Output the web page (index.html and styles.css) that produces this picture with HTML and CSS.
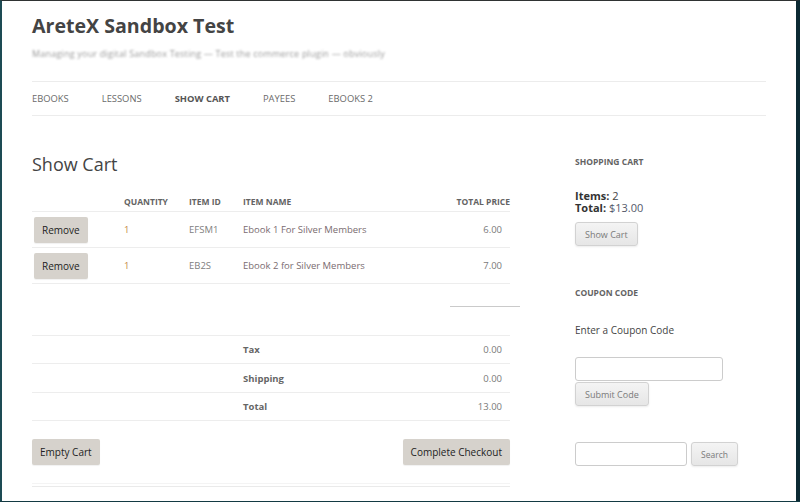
FILE: index.html
```html
<!DOCTYPE html>
<html lang="en">
<head>
<meta charset="utf-8">
<title>AreteX Sandbox Test</title>
<link rel="stylesheet" href="styles.css">
</head>
<body>
<div class="page">
  <header class="site-header">
    <h1 class="site-title">AreteX Sandbox Test</h1>
    <p class="tagline">Managing your digital Sandbox Testing — Test the commerce plugin — obviously</p>
    <nav class="nav">
      <a>EBOOKS</a>
      <a>LESSONS</a>
      <a class="current">SHOW CART</a>
      <a>PAYEES</a>
      <a>EBOOKS 2</a>
    </nav>
  </header>
  <div class="content">
    <main class="main">
      <h2 class="entry-title">Show Cart</h2>
      <table class="cart">
        <colgroup>
          <col class="c1"><col class="c2"><col class="c3"><col class="c4"><col class="c5">
        </colgroup>
        <thead>
          <tr><th></th><th>Quantity</th><th>Item ID</th><th>Item Name</th><th class="r">Total Price</th></tr>
        </thead>
        <tbody>
          <tr><td><button class="btn">Remove</button></td><td class="qty">1</td><td class="id">EFSM1</td><td class="name">Ebook 1 For Silver Members</td><td class="r price">6.00</td></tr>
          <tr><td><button class="btn">Remove</button></td><td class="qty">1</td><td class="id">EB2S</td><td class="name">Ebook 2 for Silver Members</td><td class="r price">7.00</td></tr>
        </tbody>
      </table>
      <div class="sep"></div>
      <table class="totals">
        <colgroup><col class="t1"><col class="t2"><col class="t3"></colgroup>
        <tr><td></td><th>Tax</th><td class="r price">0.00</td></tr>
        <tr class="tall"><td></td><th>Shipping</th><td class="r price">0.00</td></tr>
        <tr><td></td><th>Total</th><td class="r price">13.00</td></tr>
      </table>
      <div class="actions">
        <button class="btn big">Empty Cart</button>
        <button class="btn big">Complete Checkout</button>
      </div>
      <div class="footer-line"></div>
    </main>
    <aside class="sidebar">
      <section class="widget">
        <h3 class="widget-title">Shopping Cart</h3>
        <div class="mini">
          <div><b>Items:</b> 2</div>
          <div><b>Total:</b> <span class="amt">$13.00</span></div>
        </div>
        <button class="lbtn">Show Cart</button>
      </section>
      <section class="widget coupon">
        <h3 class="widget-title">Coupon Code</h3>
        <p class="coupon-label">Enter a Coupon Code</p>
        <input class="field coupon-field" type="text">
        <button class="lbtn">Submit Code</button>
      </section>
      <form class="search">
        <input class="field search-field" type="text">
        <button class="lbtn search-btn" type="button">Search</button>
      </form>
    </aside>
  </div>
</div>
</body>
</html>
```

FILE: styles.css
```css
html {
  background: #133a43;
}
body {
  margin: 0;
  font-family: "Open Sans", "Liberation Sans", sans-serif;
  color: #444;
}
.page {
  background: #fff;
  border-top: 1px solid #2f3333;
  border-left: 2px solid #1d4b54;
  border-right: 4px solid #0c2a33;
  padding: 12px 30px 0 30px;
  box-sizing: border-box;
  height: 501px;
  overflow: hidden;
}
.site-title {
  margin: 0;
  font-size: 19.6px;
  line-height: 26px;
  font-weight: 700;
  color: #444;
}
.tagline {
  margin: 8px 0 0 0;
  font-size: 9px;
  line-height: 14px;
  color: #9a9a9a;
  filter: blur(1.2px);
  white-space: nowrap;
  letter-spacing: 0.2px;
}
.nav {
  margin-top: 20px;
  border-top: 1px solid #ececec;
  border-bottom: 1px solid #ececec;
  height: 33px;
  display: flex;
  align-items: center;
  font-size: 9.4px;
  color: #6a6a6a;
}
.nav a {
  margin-right: 33px;
}
.nav a.current {
  font-weight: 700;
  color: #555;
}
.content {
  display: flex;
  justify-content: space-between;
}
.main {
  width: 478px;
}
.entry-title {
  margin: 36px 0 0 0;
  font-size: 18px;
  line-height: 24px;
  font-weight: 400;
  color: #444;
}
table {
  border-collapse: collapse;
  width: 100%;
  table-layout: fixed;
}
.cart {
  margin-top: 15px;
}
.c1 { width: 92px; }
.c2 { width: 65px; }
.c3 { width: 54px; }
.c5 { width: 60px; }
.cart th {
  text-align: left;
  font-size: 8.5px;
  font-weight: 700;
  text-transform: uppercase;
  color: #636363;
  height: 20px;
  padding: 0;
  vertical-align: middle;
  border-bottom: 1px solid #ededed;
}
.cart th.r, td.r {
  text-align: right;
}
.cart td {
  height: 35px;
  padding: 0;
  border-bottom: 1px solid #ededed;
  font-size: 9.5px;
  vertical-align: middle;
}
.cart td.price, .totals td.price {
  padding-right: 8px;
}
.qty { color: #c48a46; }
.id { color: #808080; }
.name { color: #7a6c70; }
.price { color: #7a7a7a; }
.btn {
  font-family: inherit;
  background: #d6d2cc;
  border: none;
  border-radius: 2px;
  color: #222;
  font-size: 10px;
  height: 26px;
  padding: 0 8px;
  margin-left: 2px;
  box-shadow: 0 1px 1px rgba(0,0,0,0.06);
}
.sep {
  margin: 22px -10px 0 auto;
  width: 70px;
  border-top: 1px solid #cacaca;
}
.totals {
  margin-top: 28px;
  border-top: 1px solid #ededed;
}
.t1 { width: 211px; }
.t3 { width: 80px; }
.totals td, .totals th {
  height: 27px;
  padding: 0;
  border-bottom: 1px solid #ededed;
  font-size: 9.5px;
  vertical-align: middle;
}
.totals tr.tall td, .totals tr.tall th {
  height: 28px;
}
.totals th {
  text-align: left;
  font-weight: 700;
  color: #666;
}
.actions {
  display: flex;
  justify-content: space-between;
  margin-top: 18px;
}
.btn.big {
  margin: 0;
  height: 26px;
  padding: 0 8px;
}
.footer-line {
  margin-top: 18px;
  height: 2px;
  border-top: 1px solid #f4f4f4;
  border-bottom: 1px solid #eaeaea;
}
.sidebar {
  width: 191px;
}
.widget-title {
  margin: 0;
  font-size: 8.5px;
  font-weight: 700;
  text-transform: uppercase;
  color: #636363;
  line-height: 12px;
}
.widget:first-child {
  margin-top: 40px;
}
.mini {
  margin-top: 22px;
  font-size: 11px;
  line-height: 12px;
  color: #444;
}
.mini b { color: #333; }
.amt { color: #54586a; }
.lbtn {
  font-family: inherit;
  font-size: 9px;
  color: #7a7a7a;
  height: 24px;
  padding: 0 9px;
  border: 1px solid #d2d2d2;
  border-radius: 3px;
  background: linear-gradient(#f4f4f4, #e6e6e6);
  box-shadow: 0 1px 2px rgba(0,0,0,0.08);
}
.widget .lbtn {
  display: block;
  margin-top: 8px;
}
.coupon {
  margin-top: 41px;
}
.coupon-label {
  margin: 24px 0 0 0;
  font-size: 10px;
  line-height: 14px;
  color: #444;
}
.field {
  display: block;
  box-sizing: border-box;
  height: 24px;
  border: 1px solid #ccc;
  border-radius: 3px;
  background: #fff;
  padding: 0 4px;
}
.coupon-field {
  margin-top: 20px;
  width: 148px;
}
.coupon .lbtn {
  margin-top: 1px;
}
.search {
  margin: 36px 0 0 0;
  display: flex;
  gap: 4px;
}
.search-field {
  width: 112px;
}
.search-btn {
  font-size: 8.5px;
}
```
